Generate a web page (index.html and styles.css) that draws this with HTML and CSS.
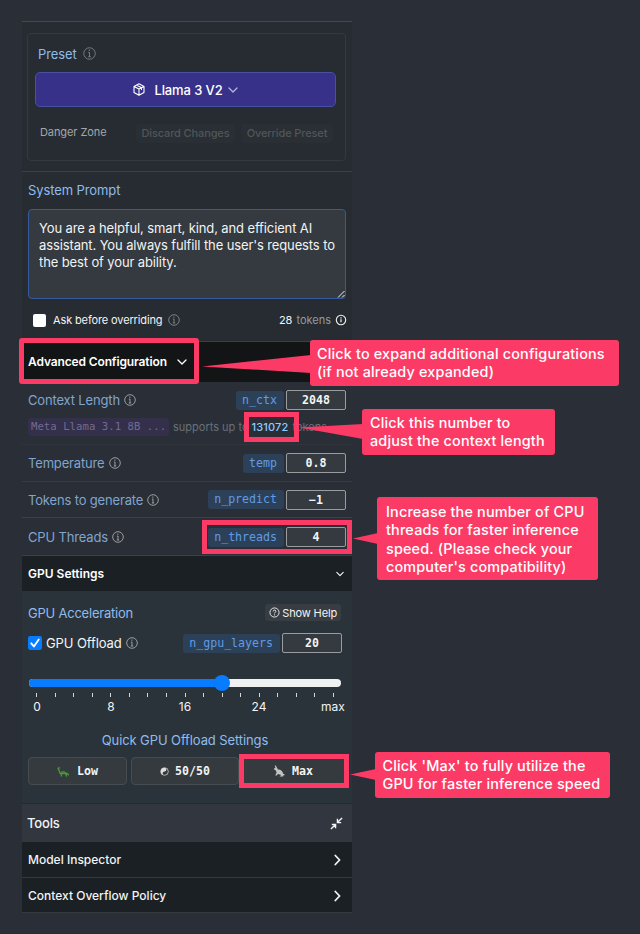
FILE: index.html
```html
<!DOCTYPE html>
<html lang="en">
<head>
<meta charset="utf-8">
<title>Model settings</title>
<link rel="stylesheet" href="styles.css">
</head>
<body>
<svg class="defs" width="0" height="0">
  <symbol id="info" viewBox="0 0 12 12"><circle cx="6" cy="6" r="5.3" fill="none" stroke="currentColor" stroke-width=".9"/><path d="M6 5v4M4.9 5.1H6M4.8 9h2.4" fill="none" stroke="currentColor" stroke-width=".9"/><circle cx="5.9" cy="3.1" r=".7" fill="currentColor"/></symbol>
  <symbol id="down" viewBox="0 0 10 6"><path d="M1 1l4 4 4-4" fill="none" stroke="currentColor" stroke-width="1.3" stroke-linecap="round" stroke-linejoin="round"/></symbol>
  <symbol id="right" viewBox="0 0 7 12"><path d="M1.3 1.5L5.6 6l-4.3 4.5" fill="none" stroke="currentColor" stroke-width="1.8" stroke-linecap="round" stroke-linejoin="round"/></symbol>
</svg>
<main class="panel">
  <section class="preset-section">
    <div class="card">
      <div class="label preset-label"><span>Preset</span><svg class="info"><use href="#info"/></svg></div>
      <div class="preset-button">
        <svg class="cube" viewBox="0 0 12 13"><path d="M6 .8l5 2.6v6L6 12.2 1 9.4v-6zM1 3.4l5 2.7 5-2.7M6 6.1v6M3.500 2.1l5 2.700v2.300" fill="none" stroke="currentColor" stroke-width="1.1" stroke-linejoin="round"/></svg>
        <span>Llama 3 V2</span>
        <svg class="down"><use href="#down"/></svg>
      </div>
      <div class="danger"><span class="zone">Danger Zone</span><span class="ghost discard">Discard Changes</span><span class="ghost override">Override Preset</span></div>
    </div>
  </section>
  <section class="prompt-section">
    <div class="label prompt-label">System Prompt</div>
    <div class="prompt">You are a helpful, smart, kind, and efficient AI<br>assistant. You always fulfill the user's requests to<br>the best of your ability.
      <svg class="grip" viewBox="0 0 8 8"><path d="M1 7.500L7.500 1M5 7.500L7.500 5" stroke="currentColor" fill="none"/></svg>
    </div>
    <div class="ask"><i class="box"></i><span class="ask-text">Ask before overriding</span><svg class="info"><use href="#info"/></svg><span class="count">28</span><span class="unit">tokens</span><svg class="token-info" viewBox="0 0 12 12"><circle cx="6" cy="6" r="4.700" fill="none" stroke="currentColor" stroke-width="1.100"/><path d="M6 5.300v3M6 3.300v1.100" stroke="currentColor" stroke-width="1.200"/></svg></div>
  </section>
  <header class="bar advanced"><span class="advanced-text">Advanced Configuration</span><svg class="down"><use href="#down"/></svg><i class="mark mark-advanced"></i></header>
  <section class="params">
    <div class="param context"><span class="label l-context">Context Length</span><svg class="info"><use href="#info"/></svg><code class="key">n_ctx</code><b class="value">2048</b></div>
    <div class="support"><code class="model">Meta Llama 3.1 8B ...</code><span class="supports">supports up to</span><span class="limit">131072<i class="mark mark-limit"></i></span><span class="tokens">tokens</span></div>
    <div class="param temp"><span class="label l-temp">Temperature</span><svg class="info"><use href="#info"/></svg><code class="key">temp</code><b class="value">0.8</b></div>
    <div class="param generate"><span class="label l-generate">Tokens to generate</span><svg class="info"><use href="#info"/></svg><code class="key">n_predict</code><b class="value">−1</b></div>
    <div class="param threads"><span class="label l-threads">CPU Threads</span><svg class="info"><use href="#info"/></svg><code class="key">n_threads</code><b class="value">4</b><i class="mark mark-threads"></i></div>
  </section>
  <header class="bar gpu-head"><span>GPU Settings</span><svg class="down"><use href="#down"/></svg></header>
  <section class="gpu">
    <div class="accel"><span class="label l-accel">GPU Acceleration</span><span class="help"><svg viewBox="0 0 12 12"><circle cx="6" cy="6" r="5" fill="none" stroke="currentColor"/><path d="M4.500 4.800c0-2 3-2 3 0 0 1-1.500 1-1.500 2.200M6 8v1.200" fill="none" stroke="currentColor"/></svg>Show Help</span></div>
    <div class="offload"><svg class="check" viewBox="0 0 13 13"><rect width="13" height="13" rx="2" fill="#087cff"/><path d="M3 6.800l2.500 2.900L10 3.200" fill="none" stroke="#fff" stroke-width="1.700" stroke-linecap="round" stroke-linejoin="round"/></svg><span class="offload-text">GPU Offload</span><svg class="info"><use href="#info"/></svg><code class="key">n_gpu_layers</code><b class="value">20</b></div>
    <div class="slider"><i class="fill"></i><i class="thumb"></i></div>
    <div class="ticks"><i></i><i></i><i></i><i></i><i></i><i></i><i></i><i></i><i></i><i></i><i></i><i></i><i></i><i></i><i></i><i></i><i></i></div>
    <div class="scale"><span>0</span><span>8</span><span>16</span><span>24</span><span>max</span></div>
    <div class="label quick-label">Quick GPU Offload Settings</div>
    <div class="quick">
      <div class="choice low"><svg class="turtle" viewBox="0 0 12 11"><path d="M3.200 7.500C3.500 3.800 8.500 3.500 10 7.800z" fill="#40783e"/><path d="M2.600 2c-1.500-.8-2 1.200-.9 1.700L3.300 7.500h6.900l1.300 1.300M4.600 7.500L4.300 10M9 8l.5 2" fill="none" stroke="#4c9b35" stroke-width="1.300" stroke-linecap="round"/></svg>Low</div>
      <div class="choice half"><svg class="yin" viewBox="0 0 10 10"><circle cx="5" cy="5" r="4.200" fill="#ddd"/><path d="M5 .8a2.100 2.100 0 0 1 0 4.200 2.100 2.100 0 0 0 0 4.200A4.200 4.200 0 0 0 5 .8" fill="#343a3e"/><circle cx="5" cy="5" r="4.200" fill="none" stroke="#ddd" stroke-width=".7"/><circle cx="5" cy="3" r=".6" fill="#ddd"/><circle cx="5" cy="7" r=".6" fill="#343a3e"/></svg>50/50</div>
      <div class="choice max"><svg class="rabbit" viewBox="0 0 12 12"><path d="M.5 4L2.400 2.700 1.700.3l1.200.5L4 2.700l.9 1.800c2.700-.2 4.900 1.500 5.200 4.200l1.500.6-.3 1.200-1.600.1.700 1H6.500l1.700-1.500L5 9l-1.800 1.700-.9-.5 1.300-2.500-.7-2.300z" fill="#c4c5c3"/></svg>Max<i class="mark mark-max"></i></div>
    </div>
  </section>
  <header class="tools"><span>Tools</span><svg viewBox="0 0 14 14"><path d="M13 1L8.500 5.500M8 2v4h4M1 13l4.500-4.500M2 8h4v4" fill="none" stroke="currentColor" stroke-width="1.500"/></svg></header>
  <div class="tool inspector"><span>Model Inspector</span><svg class="right"><use href="#right"/></svg></div>
  <div class="tool overflow"><span>Context Overflow Policy</span><svg class="right"><use href="#right"/></svg></div>
</main>
<aside class="note note-advanced"><svg viewBox="0 0 109 20"><path d="M0 11.500L109 0v18z"/></svg><span>Click to expand additional configurations</span><span>(if not already expanded)</span></aside>
<aside class="note note-limit"><svg viewBox="0 0 64 16"><path d="M0 3.500L64 0v15z"/></svg><span>Click this number to</span><span>adjust the context length</span></aside>
<aside class="note note-threads"><svg viewBox="0 0 25 12"><path d="M0 5.500L25 0v11z"/></svg><span>Increase the number of CPU</span><span>threads for faster inference</span><span>speed. (Please check your</span><span>computer's compatibility)</span></aside>
<aside class="note note-max"><svg viewBox="0 0 26 12"><path d="M0 5.500L26 0v11z"/></svg><span>Click 'Max' to fully utilize the</span><span>GPU for faster inference speed</span></aside>
</body>
</html>
```
FILE: styles.css
```css
* { box-sizing: border-box; }
body { margin: 0; width: 640px; height: 934px; position: relative; overflow: hidden; background: #2a2e36; border-bottom: 1px solid #2d2938; color: #f2f4f5; font: 500 12px/16px Inter, "Liberation Sans", sans-serif; }
.defs { position: absolute; }
svg { display: block; flex: none; }
span, code, b { white-space: nowrap; }
.panel { width: 330px; margin-left: 22px; padding-top: 21px; }
.label { color: #8fbcec; font-size: 13px; font-weight: 400; letter-spacing: -.1px; }
.info { width: 12px; height: 12px; color: #a5a9ac; margin-left: 4px; }
.down { width: 10px; height: 6px; }
.preset-section { height: 151px; padding: 11px 6px 0 5px; background: #262c31; border-top: 1px solid #44494e; border-bottom: 1px solid #3c4145; }
.card { height: 128px; border: 1px solid #33393e; border-radius: 4px; padding: 11px 8px 0; }
.preset-label { display: flex; align-items: center; height: 17px; padding-left: 2px; }
.preset-label .info { margin-left: 6px; width: 13px; height: 13px; color: #777d81; }
.preset-button { height: 35px; margin-top: 10px; margin-left: -1px; margin-right: 1px; border: 1px solid #4850a0; border-radius: 5px; background: #37318a; display: flex; align-items: center; justify-content: center; font-size: 13px; color: #fff; }
.preset-button span { letter-spacing: -.1px; }
.preset-button .cube { width: 12px; height: 13px; margin-right: 9px; }
.preset-button .down { margin-left: 5px; color: #b6b4d7; }
.danger { display: flex; align-items: center; height: 22px; margin-top: 15px; font-size: 11px; }
.zone { position: relative; top: -1px; width: 100px; padding-left: 4px; color: #a4a7aa; font-weight: 400; letter-spacing: -.08px; }
.ghost { height: 19px; line-height: 19px; border-radius: 4px; background: #292f34; color: #50565a; text-align: center; }
.discard { width: 99px; margin-right: 6px; letter-spacing: -.18px; font-size: 11px; }
.discard, .override { letter-spacing: -.12px; }
.override { width: 92px; }
.prompt-section { height: 169px; padding: 10px 6px 0; background: #262c31; }
.prompt-label { line-height: 17px; }
.prompt { position: relative; height: 90px; margin-top: 10px; padding: 10px 10px; border: 1px solid #345b9b; border-radius: 4px; background: #343a40; font-size: 13px; line-height: 17px; font-weight: 400; color: #f2f3f3; white-space: nowrap; letter-spacing: -.12px; }
.grip { position: absolute; width: 8px; height: 8px; right: 0; bottom: 0; }
.ask { display: flex; align-items: center; height: 16px; margin-top: 13px; padding-left: 5px; font-size: 11px; font-weight: 400; }
.box { width: 13px; height: 13px; border-radius: 2px; background: #fff; margin-right: 7px; }
.ask-text { letter-spacing: -.13px; }
.ask .info { margin-left: 6px; color: #858a8d; }
.count { margin-left: auto; }
.unit { color: #969a9d; margin: 0 4px; }
.token-info { width: 12px; height: 12px; margin-right: -1px; }
.bar { position: relative; display: flex; align-items: center; padding: 0 6px; font-weight: 600; color: #fff; }
.advanced { height: 41px; background: #121416; border-top: 1px solid #3c4044; }
.advanced-text { letter-spacing: -.13px; }
.advanced .down { margin-left: 10px; }
.mark { position: absolute; border: 5px solid #fb3b66; }
.mark-advanced { left: -3px; top: -4px; width: 180px; height: 46px; border-radius: 3px; }
.param { position: relative; display: flex; align-items: center; padding: 0 6px; }
.param .label { color: #80a5ce; letter-spacing: -.16px; }
.key { margin-left: auto; height: 19px; padding: 0 7px 0 6px; background: #2c4158; border-radius: 3px; color: #629be5; font: 11.6px/19px "DejaVu Sans Mono", monospace; }
.value { width: 60px; height: 20px; margin-left: 2px; border: 1px solid #9a9da0; border-radius: 2px; background: #343a40; text-align: center; font: 700 11.6px/18px "DejaVu Sans Mono", monospace; }
.context { height: 36px; }
.support { display: flex; align-items: center; height: 27px; padding: 0 6px 8px; border-bottom: 1px solid #30353b; font-size: 11px; font-weight: 400; color: #69717b; }
.model { width: 141px; height: 18px; padding-left: 3px; margin-right: 4px; background: #342f4a; border-radius: 3px; color: #726b91; font: 10.7px/18px "DejaVu Sans Mono", monospace; }
.limit { position: relative; margin-left: 3px; color: #8ecbff; font-weight: 500; z-index: 1; letter-spacing: .15px; }
.mark-limit { left: -8px; top: -7px; width: 55px; height: 30px; }
.tokens { margin-left: 4px; }
.temp { height: 37px; border-bottom: 1px solid #373c41; }
.generate { height: 36px; border-bottom: 1px solid #3c4146; }
.threads { height: 38px; border-bottom: 1px solid #3c4146; padding-top: 1px; }
.mark-threads { left: 180px; right: 0; top: 2px; height: 34px; }
.gpu-head { height: 35px; background: #1b2025; }
.gpu-head .down { margin-left: auto; width: 8px; margin-right: 2px; }
.gpu { height: 212px; padding: 12px 6px 0; background: #2b333a; }
.accel { display: flex; align-items: center; height: 19px; }
.l-accel { letter-spacing: -.22px; }
.help { display: flex; align-items: center; gap: 2px; height: 17px; margin-left: auto; margin-right: 5px; padding: 0 4px; border-radius: 3px; background: #373d43; font-size: 11px; font-weight: 400; letter-spacing: -.15px; }
.help svg { width: 11px; height: 11px; }
.offload { display: flex; align-items: center; height: 20px; margin-top: 11px; padding-right: 4px; }
.check { width: 14px; height: 14px; }
.offload-text { margin-left: 4px; font-size: 13px; font-weight: 400; letter-spacing: -.1px; }
.slider { position: relative; height: 8px; width: 312px; margin: 26px 0 0 1px; background: #f0f2f1; border-radius: 4px; }
.fill { display: block; width: 193px; height: 8px; border-radius: 4px; background: #087cff; }
.thumb { position: absolute; width: 16px; height: 16px; border-radius: 50%; background: #087cff; left: 185px; top: -4px; }
.ticks { display: flex; justify-content: space-between; height: 4px; width: 298px; margin: 6px 0 0 8px; }
.ticks i { width: 1px; height: 4px; background: #d4d8da; }
.scale { display: grid; grid-template-columns: repeat(5, 74px); width: 370px; margin: 1px 0 0 -28px; text-align: center; line-height: 17px; font-weight: 400; }
.quick-label { height: 17px; margin-top: 17px; text-align: center; padding-right: 4px; }
.quick { display: flex; gap: 4px; margin-top: 8px; }
.choice { position: relative; display: flex; align-items: center; justify-content: center; height: 28px; border: 1px solid #474c50; border-radius: 4px; background: #343a3e; font: 700 11.6px/16px "DejaVu Sans Mono", monospace; }
.low { width: 99px; }
.half { width: 108px; }
.max { width: 104px; margin-left: -2px; }
.turtle { width: 12px; height: 11px; margin-right: 8px; }
.yin { width: 9px; height: 9px; margin-right: 6px; }
.rabbit { width: 12px; height: 12px; margin-right: 7px; }
.mark-max { left: -3px; top: -4px; width: 110px; height: 34px; }
.tools { display: flex; align-items: center; justify-content: space-between; height: 39px; padding: 0 9px 0 5px; border-top: 1px solid #242930; background: #31363f; font-size: 13px; font-weight: 500; letter-spacing: -.15px; }
.tools svg { width: 13px; height: 13px; }
.tool { display: flex; align-items: center; justify-content: space-between; height: 35px; padding: 1px 11px 0 6px; background: #1b2025; border-bottom: 1px solid #353a3e; }
.inspector { height: 36px; padding-top: 0; }
.right { width: 7px; height: 12px; }
.note { position: absolute; border-radius: 3px; background: #fb3b66; color: #fff; font-size: 14.4px; line-height: 18px; font-weight: 500; letter-spacing: .17px; z-index: 2; }
.note span { display: block; }
.note svg { position: absolute; fill: #fb3b66; }
.note-advanced { left: 310px; top: 340px; width: 309px; height: 46px; padding: 5px 7px; }
.note-advanced svg { left: -108px; top: 15px; width: 109px; height: 20px; }
.note-limit { left: 362px; top: 409px; width: 193px; height: 46px; padding: 5px 8px; }
.note-limit svg { left: -63px; top: 15px; width: 64px; height: 16px; }
.note-threads { left: 377px; top: 497px; width: 221px; height: 83px; padding: 6px 9px; line-height: 18.300px; }
.note-threads svg { left: -24px; top: 36px; width: 25px; height: 12px; }
.note-max { left: 375px; top: 752px; width: 235px; height: 46px; padding: 5px 7.5px; }
.note-max svg { left: -25px; top: 17px; width: 26px; height: 12px; }
```
